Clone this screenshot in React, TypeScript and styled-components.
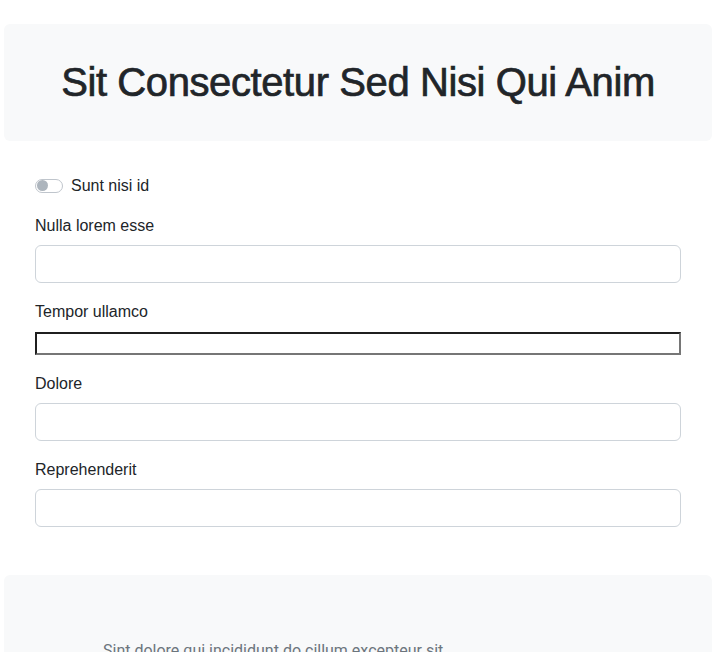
import React from "react";
import styled, { createGlobalStyle } from "styled-components";

const Global = createGlobalStyle`
  html, body { margin: 0; padding: 0; background: #fff; }
  body {
    font-family: "Liberation Sans", Arial, sans-serif;
    font-size: 16px;
    line-height: 1.5;
    color: #212529;
  }
  * { box-sizing: border-box; }
`;

const Page = styled.div`
  padding: 24px 4px 0;
  display: flex;
  flex-direction: column;
`;

const Header = styled.header`
  background: #f8f9fa;
  border-radius: 6px;
  padding: 34px 16px 35px;
  text-align: center;
`;

const Title = styled.h1`
  margin: 0;
  font-family: "Liberation Sans", Arial, sans-serif;
  font-weight: 400;
  font-size: 40px;
  line-height: 48px;
  letter-spacing: -0.4px;
  -webkit-text-stroke: 0.7px #212529;
  color: #212529;
`;

const Form = styled.form`
  margin: 32px 31px 0;
  display: flex;
  flex-direction: column;
  gap: 16px;
`;

const SwitchRow = styled.label`
  display: flex;
  align-items: center;
  gap: 8px;
  height: 24px;
  padding-top: 1px;
`;

const Track = styled.span`
  width: 28px;
  height: 14px;
  border: 1px solid #bfc5cc;
  border-radius: 7px;
  background: #fff;
  display: flex;
  align-items: center;
  padding: 0 1px;
`;

const Knob = styled.span`
  width: 11px;
  height: 11px;
  border-radius: 50%;
  background: #adb5bd;
`;

const Field = styled.div`
  display: flex;
  flex-direction: column;
  gap: 7px;
`;

const Label = styled.label`
  line-height: 24px;
  padding-top: 1px;
`;

const Input = styled.input`
  display: block;
  width: 100%;
  height: 38px;
  border: 1px solid #ced4da;
  border-radius: 6px;
  background: #fff;
  padding: 6px 12px;
  font: inherit;
`;

const PlainInput = styled.input`
  display: block;
  width: 100%;
  height: 23px;
  margin-top: 1px;
  border: 2px solid;
  border-color: #1f1f1f #767676 #767676 #1f1f1f;
  background: #fff;
  padding: 0;
  font: inherit;
`;

const Footer = styled.footer`
  margin-top: 48px;
  background: #f8f9fa;
  border-radius: 6px;
  padding: 64px 16px 40px 99px;
`;

const Lead = styled.p`
  margin: 0;
  max-width: 370px;
  font-family: Roboto, "Liberation Sans", sans-serif;
  font-size: 16px;
  line-height: 24px;
  color: #6c757d;
`;

export default function App() {
  return (
    <>
      <Global />
      <Page>
        <Header>
          <Title>Sit Consectetur Sed Nisi Qui Anim</Title>
        </Header>
        <Form onSubmit={(e) => e.preventDefault()}>
          <SwitchRow>
            <Track>
              <Knob />
            </Track>
            Sunt nisi id
          </SwitchRow>
          <Field>
            <Label>Nulla lorem esse</Label>
            <Input type="text" />
          </Field>
          <Field>
            <Label>Tempor ullamco</Label>
            <PlainInput type="text" />
          </Field>
          <Field>
            <Label>Dolore</Label>
            <Input type="text" />
          </Field>
          <Field>
            <Label>Reprehenderit</Label>
            <Input type="text" />
          </Field>
        </Form>
        <Footer>
          <Lead>Sint dolore qui incididunt do cillum excepteur sit amet, consectetur adipiscing elit.</Lead>
        </Footer>
      </Page>
    </>
  );
}
